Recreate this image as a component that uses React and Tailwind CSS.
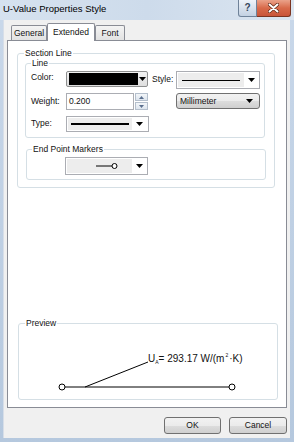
import React from "react";

const Arrow = () => (
  <svg width="7" height="4" viewBox="0 0 7 4" className="block">
    <path d="M0 0h7L3.5 4z" fill="#000" />
  </svg>
);

function LineCombo({ w, h, grayW, children }) {
  return (
    <div
      className="flex items-stretch border border-[#abadb3] bg-white p-[1px]"
      style={{ width: w, height: h }}
    >
      <div className="bg-[#ededed] flex items-center justify-center" style={{ width: grayW }}>
        {children}
      </div>
      <div className="flex-1 flex items-center justify-center">
        <Arrow />
      </div>
    </div>
  );
}

function GroupLabel({ children, ml = "ml-[5px]" }) {
  return (
    <div className={`-mt-[7px] ${ml} px-[1px] bg-white w-fit h-[12px] leading-[12px] whitespace-nowrap`}>
      {children}
    </div>
  );
}

export default function App() {
  return (
    <div className="w-[294px] h-[442px] flex flex-col bg-gradient-to-b from-[#c9d8ea] to-[#b5c8de] font-['Liberation_Sans',Arial,sans-serif] text-[8.5px] text-[#111] overflow-hidden">
      {/* Title bar */}
      <div className="h-[20px] shrink-0 flex items-start bg-gradient-to-r from-[#d6e2ef] via-[#cddbeb] to-[#dbe5f0]">
        <div className="pl-[3px] pt-[3px] text-[9.5px] leading-[12px] whitespace-nowrap text-black">U-Value Properties Style</div>
        <div className="ml-auto mr-[3px] flex">
          <div className="w-[19px] h-[17px] rounded-bl-[3px] border border-t-0 border-[#6f8299] bg-gradient-to-b from-[#eef3f9] to-[#c3d1e2] flex items-center justify-center text-[10px] font-bold text-[#34465c] leading-none">
            ?
          </div>
          <div className="w-[34px] h-[17px] rounded-br-[3px] border border-t-0 border-l-0 border-[#7b3522] bg-gradient-to-b from-[#eaa28a] via-[#d86a4a] to-[#c9553a] flex items-center justify-center">
            <svg width="11" height="10" viewBox="0 0 11 10">
              <path d="M1.5 1.5l8 7M9.5 1.5l-8 7" stroke="#5a2414" strokeWidth="3.4" strokeLinecap="round" />
              <path d="M1.5 1.5l8 7M9.5 1.5l-8 7" stroke="#fff" strokeWidth="2" strokeLinecap="round" />
            </svg>
          </div>
        </div>
      </div>

      {/* Client area */}
      <div className="flex-1 ml-[3px] mr-[4px] mb-[4px] bg-[#f0f0f0] flex flex-col border-l border-[#d7dee8]">
        {/* Tabs */}
        <div className="h-[20px] shrink-0 flex items-end pl-[7px]">
          <div className="w-[36px] h-[15px] border border-b-0 border-[#898c95] rounded-t-[2px] bg-gradient-to-b from-[#f4f4f4] to-[#e2e2e2] flex items-center justify-center leading-none">
            General
          </div>
          <div className="relative z-10 -mb-[1px] w-[48px] h-[18px] border border-b-0 border-[#898c95] rounded-t-[2px] bg-white flex items-start pt-[2px] justify-center leading-[12px]">
            Extended
          </div>
          <div className="w-[30px] h-[15px] border border-b-0 border-[#898c95] rounded-t-[2px] bg-gradient-to-b from-[#f4f4f4] to-[#e2e2e2] flex items-center justify-center leading-none">
            Font
          </div>
        </div>

        {/* Tab page */}
        <div className="mx-[3px] h-[368px] shrink-0 border border-[#898c95] bg-white flex flex-col">
          {/* Section Line group */}
          <div className="ml-[9px] mt-[12px] w-[258px] border border-[#d5dfe5] rounded-[3px] pb-[7px]">
            <GroupLabel ml="ml-[6px]">Section Line</GroupLabel>

            {/* Line group */}
            <div className="ml-[7px] mt-[4px] w-[240px] border border-[#d5dfe5] rounded-[3px] pb-[5px]">
              <GroupLabel>Line</GroupLabel>

              {/* Color row */}
              <div className="mt-[2px] flex items-start pl-[5px]">
                <div className="w-[35px] leading-[12px]">Color:</div>
                <div className="w-[82px] h-[16px] border border-[#8e8f8f] rounded-[2px] bg-gradient-to-b from-[#f2f2f2] to-[#dedede] flex items-center p-[1px]">
                  <div className="ml-[1px] w-[69px] h-[12px] bg-black" />
                  <div className="flex-1 flex justify-center">
                    <Arrow />
                  </div>
                </div>
                <div className="ml-[4px] mt-[2px] w-[24px] leading-[12px]">Style:</div>
                <LineCombo w={84} h={18} grayW={66}>
                  <div className="w-[58px] h-[1px] bg-black" />
                </LineCombo>
              </div>

              {/* Weight row */}
              <div className="mt-[4px] flex items-start pl-[5px]">
                <div className="w-[35px] mt-[2px] leading-[12px]">Weight:</div>
                <div className="w-[68px] h-[17px] border border-[#abadb3] bg-white pl-[2px] leading-[15px]">0.200</div>
                <div className="ml-[1px] w-[13px] h-[17px] flex flex-col">
                  <div className="h-[8px] border border-[#b4bfcc] bg-gradient-to-b from-[#f3f6f9] to-[#dde5ee] flex items-center justify-center">
                    <svg width="5" height="3" viewBox="0 0 5 3"><path d="M0 3h5L2.5 0z" fill="#5b6f8e" /></svg>
                  </div>
                  <div className="mt-[1px] h-[8px] border border-[#b4bfcc] bg-gradient-to-b from-[#f3f6f9] to-[#dde5ee] flex items-center justify-center">
                    <svg width="5" height="3" viewBox="0 0 5 3"><path d="M0 0h5L2.5 3z" fill="#5b6f8e" /></svg>
                  </div>
                </div>
                <div className="ml-[28px] w-[84px] h-[16px] border border-[#707070] rounded-[3px] bg-[linear-gradient(#f2f2f2_0%,#ebebeb_50%,#dddddd_51%,#cfcfcf_100%)] flex items-center pl-[3px] pr-[6px]">
                  <span className="flex-1 leading-[12px]">Millimeter</span>
                  <Arrow />
                </div>
              </div>

              {/* Type row */}
              <div className="mt-[6px] flex items-start pl-[5px]">
                <div className="w-[35px] mt-[1px] leading-[12px]">Type:</div>
                <LineCombo w={83} h={16} grayW={64}>
                  <div className="w-[58px] h-[2px] bg-black" />
                </LineCombo>
              </div>
            </div>

            {/* End Point Markers group */}
            <div className="ml-[8px] mt-[11px] w-[240px] border border-[#d5dfe5] rounded-[3px] pb-[4px]">
              <GroupLabel>End Point Markers</GroupLabel>
              <div className="mt-[2px] ml-[38px]">
                <LineCombo w={83} h={18} grayW={65}>
                  <svg width="24" height="8" viewBox="0 0 24 8" className="ml-[14px]">
                    <path d="M1 4h16" stroke="#000" strokeWidth="1" />
                    <circle cx="19.5" cy="4" r="2.5" fill="#fff" stroke="#000" strokeWidth="1" />
                  </svg>
                </LineCombo>
              </div>
            </div>
          </div>

          {/* Preview group */}
          <div className="mt-auto mb-[7px] ml-[10px] w-[260px] border border-[#d5dfe5] rounded-[3px]">
            <GroupLabel ml="ml-[6px]">Preview</GroupLabel>
            <div className="relative h-[70px]">
              <svg width="258" height="70" viewBox="0 0 258 70" className="absolute inset-0">
                <path d="M66 58L129 33" stroke="#000" strokeWidth="1" />
                <path d="M46 58H210" stroke="#000" strokeWidth="1" />
                <circle cx="43" cy="58" r="3" fill="#fff" stroke="#000" strokeWidth="1" />
                <circle cx="213" cy="58" r="3" fill="#fff" stroke="#000" strokeWidth="1" />
              </svg>
              <div className="absolute left-[129px] top-[20px] text-[10px] leading-[12px] whitespace-nowrap">
                U<span className="text-[5px] align-[-2px]">A</span>= 293.17 W/(m
                <span className="text-[5px] align-[5px] px-[1px]">2</span>·K)
              </div>
            </div>
          </div>
        </div>

        {/* Buttons */}
        <div className="mt-[9px] flex justify-end gap-[8px] pr-[3px]">
          <div className="w-[57px] h-[17px] border border-[#707070] rounded-[3px] bg-[linear-gradient(#f2f2f2_0%,#ebebeb_50%,#dddddd_51%,#cfcfcf_100%)] flex items-center justify-center leading-none">
            OK
          </div>
          <div className="w-[58px] h-[17px] border border-[#707070] rounded-[3px] bg-[linear-gradient(#f2f2f2_0%,#ebebeb_50%,#dddddd_51%,#cfcfcf_100%)] flex items-center justify-center leading-none">
            Cancel
          </div>
        </div>
      </div>
    </div>
  );
}
